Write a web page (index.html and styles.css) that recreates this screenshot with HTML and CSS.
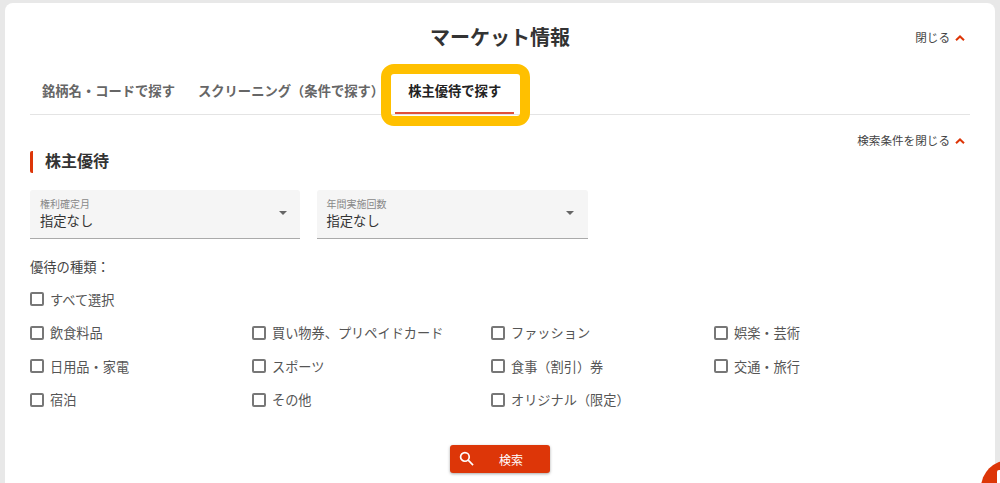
FILE: index.html
```html
<!DOCTYPE html>
<html lang="ja">
<head>
<meta charset="utf-8">
<title>マーケット情報</title>
<link rel="stylesheet" href="styles.css">
</head>
<body>
<main class="card">
  <header class="head">
    <h1 class="title">マーケット情報</h1>
    <a class="toggle toggle-top">閉じる
      <svg class="chev" viewBox="0 0 10 6"><path d="M1 5.2 5 1.4 9 5.2"/></svg>
    </a>
  </header>
  <nav class="tabs">
    <a class="tab first">銘柄名・コードで探す</a>
    <a class="tab">スクリーニング（条件で探す）</a>
    <a class="tab active">株主優待で探す<span class="mark"></span></a>
  </nav>
  <div class="cond-row">
    <a class="toggle">検索条件を閉じる
      <svg class="chev" viewBox="0 0 10 6"><path d="M1 5.2 5 1.4 9 5.2"/></svg>
    </a>
  </div>
  <h2 class="section">株主優待</h2>
  <div class="selects">
    <div class="select"><span class="sel-label">権利確定月</span><span class="sel-value">指定なし</span><i class="arrow"></i></div>
    <div class="select"><span class="sel-label">年間実施回数</span><span class="sel-value">指定なし</span><i class="arrow"></i></div>
  </div>
  <p class="kind">優待の種類：</p>
  <label class="check all"><i class="box"></i>すべて選択</label>
  <div class="grid">
    <label class="check"><i class="box"></i>飲食料品</label>
    <label class="check"><i class="box"></i>買い物券、プリペイドカード</label>
    <label class="check"><i class="box"></i>ファッション</label>
    <label class="check"><i class="box"></i>娯楽・芸術</label>
    <label class="check"><i class="box"></i>日用品・家電</label>
    <label class="check"><i class="box"></i>スポーツ</label>
    <label class="check"><i class="box"></i>食事（割引）券</label>
    <label class="check"><i class="box"></i>交通・旅行</label>
    <label class="check"><i class="box"></i>宿泊</label>
    <label class="check"><i class="box"></i>その他</label>
    <label class="check"><i class="box"></i>オリジナル（限定）</label>
  </div>
  <div class="actions">
    <button class="search" type="button">
      <svg class="search-icon" viewBox="0 0 16 16"><circle cx="6.3" cy="6.3" r="4.6"/><path d="M9.8 9.8 15 15"/></svg>
      <span>検索</span>
    </button>
  </div>
</main>
<div class="fab"></div>
</body>
</html>
```
FILE: styles.css
```css
* { box-sizing: border-box; }
html, body { height: 100%; }
body {
  margin: 0;
  padding: 3px 5px 0;
  background: #e8e8e8;
  overflow: hidden;
  font-family: Roboto, "Noto Sans CJK JP", sans-serif;
  color: #333;
}
.card {
  height: 480px;
  padding: 0 25px;
  background: #fff;
  border-radius: 8px 8px 0 0;
  overflow: hidden;
}
.head {
  position: relative;
  height: 61px;
  display: flex;
  justify-content: center;
  align-items: center;
  padding-top: 9px;
}
.title { margin: 0; font-size: 20px; font-weight: 700; line-height: 28px; color: #333; }
.toggle {
  display: flex;
  align-items: center;
  gap: 5px;
  font-size: 11.6px;
  line-height: 16px;
  color: #444;
  padding-right: 5px;
}
.toggle-top { position: absolute; right: 0; top: 27px; }
.chev { width: 10px; height: 6px; fill: none; stroke: #dd3608; stroke-width: 2; }
.tabs {
  display: flex;
  height: 51px;
  border-bottom: 1px solid #e4e4e4;
  padding-left: 12px;
}
.tab {
  position: relative;
  font-size: 13.3px;
  font-weight: 700;
  line-height: 55px;
  color: #666;
  margin-right: 24px;
  white-space: nowrap;
}
.tab.first { margin-right: 23px; }
.tab.active { color: #222; }
.mark {
  position: absolute;
  left: -13px;
  right: -13px;
  bottom: 0;
  height: 2px;
  background: #e0503a;
}
.mark::after {
  content: "";
  box-sizing: border-box;
  position: absolute;
  left: -14px;
  right: -16px;
  top: -48px;
  height: 62px;
  border: 10px solid #ffc000;
  border-radius: 13px;
}
.cond-row { display: flex; justify-content: flex-end; padding-top: 18px; height: 33px; }
.section {
  margin: 3px 0 0;
  height: 22px;
  padding-left: 12px;
  border-left: 3px solid #dd3608;
  border-radius: 2px;
  font-size: 16px;
  font-weight: 700;
  line-height: 21px;
  color: #333;
}
.selects { display: flex; gap: 16.5px; margin-top: 17px; }
.select {
  position: relative;
  width: 270px;
  height: 49px;
  padding: 8px 10px 0;
  background: #f5f5f5;
  border-bottom: 1px solid #aaa;
  border-radius: 3px 3px 0 0;
  display: flex;
  flex-direction: column;
}
.select:last-child { width: 271px; }
.sel-label { font-size: 10px; line-height: 14px; color: #888; }
.sel-value { font-size: 13.3px; line-height: 19px; color: #333; }
.arrow {
  position: absolute;
  right: 13px;
  top: 21px;
  border-style: solid;
  border-width: 4px 4px 0;
  border-color: #666 transparent transparent;
}
.select:last-child .arrow { right: 14px; }
.kind { margin: 20px 0 0; font-size: 13.3px; line-height: 18px; color: #444; }
.check {
  display: flex;
  align-items: center;
  gap: 6px;
  height: 20px;
  font-size: 13.2px;
  color: #555;
  white-space: nowrap;
}
.all { margin-top: 12px; }
.box {
  flex: none;
  width: 14px;
  height: 14px;
  border: 2px solid #777;
  border-radius: 2px;
}
.grid {
  display: grid;
  grid-template-columns: 222px 239px 223px 1fr;
  grid-auto-rows: 20px;
  row-gap: 13.5px;
  margin-top: 13.5px;
}
.actions { display: flex; justify-content: center; margin-top: 35.5px; }
.search {
  position: relative;
  width: 100px;
  height: 28px;
  padding: 0 0 0 49px;
  border: 0;
  border-radius: 3px;
  background: #dd3608;
  box-shadow: 0 1px 3px rgba(0,0,0,.35);
  color: #fff;
  font: 12px Roboto, "Noto Sans CJK JP", sans-serif;
  text-align: left;
}
.search-icon {
  position: absolute;
  left: 9px;
  top: 6px;
  width: 15px;
  height: 15px;
  fill: none;
  stroke: #fff;
  stroke-width: 1.8;
}
.fab {
  position: fixed;
  left: 981px;
  top: 460px;
  width: 56px;
  height: 56px;
  border-radius: 50%;
  background: #dd3608;
}
.fab::after {
  content: "";
  position: absolute;
  left: 16px;
  top: 10px;
  width: 8px;
  height: 30px;
  border-radius: 2px;
  background: #fff;
}
```
